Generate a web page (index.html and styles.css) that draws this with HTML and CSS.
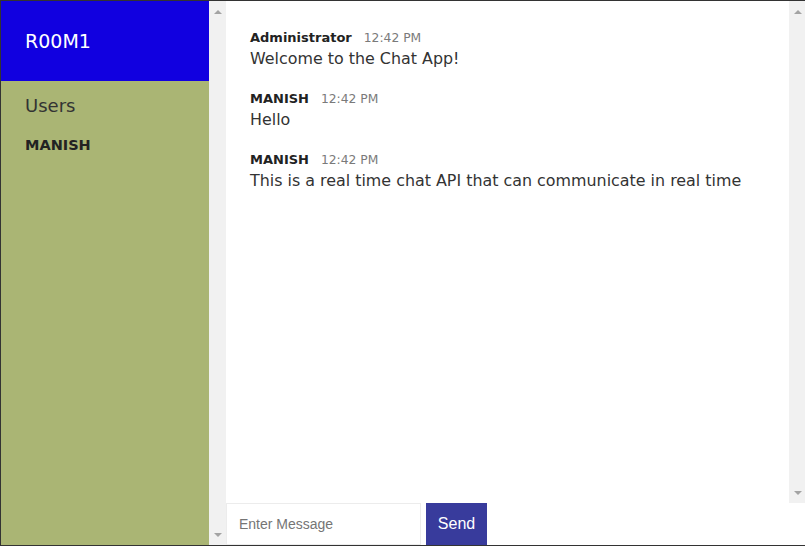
FILE: index.html
```html
<!DOCTYPE html>
<html>
<head>
<meta charset="utf-8">
<title>Chat App</title>
<link rel="stylesheet" href="styles.css">
</head>
<body>
<div class="app">
  <aside class="sidebar">
    <div class="side-content">
      <div class="room-header"><h2 class="room-name">R00M1</h2></div>
      <div class="users">
        <h3 class="users-title">Users</h3>
        <ul class="user-list">
          <li>MANISH</li>
        </ul>
      </div>
    </div>
    <div class="scrollbar full">
      <span class="arrow up"></span>
      <span class="arrow down"></span>
    </div>
  </aside>
  <main class="main">
    <div class="msg-pane">
      <div class="messages">
        <div class="message">
          <p class="meta"><span class="name">Administrator</span><span class="time">12:42 PM</span></p>
          <p class="text">Welcome to the Chat App!</p>
        </div>
        <div class="message">
          <p class="meta"><span class="name">MANISH</span><span class="time">12:42 PM</span></p>
          <p class="text">Hello</p>
        </div>
        <div class="message">
          <p class="meta"><span class="name">MANISH</span><span class="time">12:42 PM</span></p>
          <p class="text">This is a real time chat API that can communicate in real time</p>
        </div>
      </div>
      <div class="scrollbar right">
        <span class="arrow up"></span>
        <span class="arrow down"></span>
      </div>
    </div>
    <form class="msg-form">
      <input class="msg-input" type="text" placeholder="Enter Message">
      <button class="send-btn" type="button">Send</button>
    </form>
  </main>
</div>
</body>
</html>
```
FILE: styles.css
```css
* { box-sizing: border-box; }
html, body { margin: 0; padding: 0; overflow: hidden; background: #fff; }
body { font-family: "DejaVu Sans", sans-serif; }

.app {
  display: flex;
  height: 546px;
  border: 1px solid #333;
  border-right: 0;
}

.sidebar {
  display: flex;
  width: 225px;
  flex-shrink: 0;
}
.side-content {
  flex: 1;
  background: #aab574;
}
.room-header {
  height: 80px;
  background: #1100e0;
  display: flex;
  align-items: center;
  padding-left: 24px;
}
.room-name {
  margin: 0;
  color: #fff;
  font-size: 19px;
  font-weight: 400;
}
.users { padding: 13px 24px; }
.users-title {
  margin: 0;
  font-size: 18px;
  font-weight: 400;
  color: #333;
  line-height: 24px;
}
.user-list {
  list-style: none;
  margin: 0;
  padding: 17px 0 0;
}
.user-list li {
  font-size: 14.5px;
  font-weight: 700;
  color: #222;
  line-height: 20px;
}

.scrollbar {
  background: #f1f1f1;
  display: flex;
  flex-direction: column;
  justify-content: space-between;
  align-items: center;
  padding: 9px 0 8px;
}
.scrollbar.full { width: 17px; }
.scrollbar.right { width: 16px; padding-left: 1px; }
.arrow {
  width: 0;
  height: 0;
  border-left: 4px solid transparent;
  border-right: 4px solid transparent;
}
.arrow.up { border-bottom: 4px solid #a3a3a3; }
.arrow.down { border-top: 4px solid #a3a3a3; }

.main {
  flex: 1;
  display: flex;
  flex-direction: column;
  min-width: 0;
}
.msg-pane {
  flex: 1;
  display: flex;
  min-height: 0;
}
.messages {
  flex: 1;
  padding: 27px 24px;
}
.message { margin-bottom: 19px; }
.meta {
  margin: 0;
  line-height: 20px;
  display: flex;
  align-items: baseline;
  gap: 12px;
}
.name {
  font-size: 13px;
  font-weight: 700;
  color: #222;
}
.time {
  font-size: 12.3px;
  color: #7a7a7a;
}
.text {
  margin: 0;
  font-size: 15.9px;
  line-height: 22px;
  color: #333;
  white-space: nowrap;
}

.msg-form {
  display: flex;
  height: 42px;
  gap: 5px;
  margin: 0;
}
.msg-input {
  width: 195px;
  height: 42px;
  border: 1px solid #ececec;
  padding: 0 12px;
  font-family: "Liberation Sans", Arial, sans-serif;
  font-size: 14px;
  color: #333;
  outline: none;
}
.msg-input::placeholder { color: #757575; }
.send-btn {
  width: 61px;
  height: 42px;
  border: 0;
  background: #383b9c;
  color: #fff;
  font-family: "Liberation Sans", Arial, sans-serif;
  font-size: 16px;
  padding: 0;
}
```
